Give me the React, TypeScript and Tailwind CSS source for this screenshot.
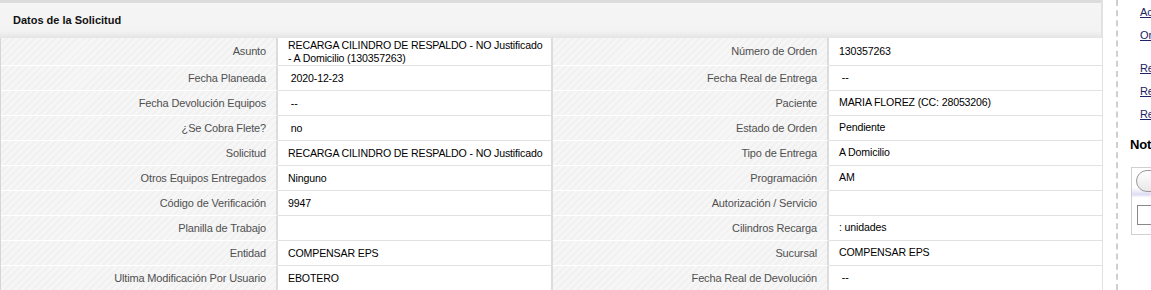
import React from "react";

const rows: [string, React.ReactNode, string, React.ReactNode][] = [
  [
    "Asunto",
    <>
      RECARGA CILINDRO DE RESPALDO - NO Justificado
      <br />- A Domicilio (130357263)
    </>,
    "Número de Orden",
    "130357263",
  ],
  ["Fecha Planeada", "\u00a02020-12-23", "Fecha Real de Entrega", "\u00a0--"],
  ["Fecha Devolución Equipos", "\u00a0--", "Paciente", "MARIA FLOREZ (CC: 28053206)"],
  ["¿Se Cobra Flete?", "\u00a0no", "Estado de Orden", "Pendiente"],
  ["Solicitud", "RECARGA CILINDRO DE RESPALDO - NO Justificado", "Tipo de Entrega", "A Domicilio"],
  ["Otros Equipos Entregados", "Ninguno", "Programación", "AM"],
  ["Código de Verificación", "9947", "Autorización / Servicio", ""],
  ["Planilla de Trabajo", "", "Cilindros Recarga", ": unidades"],
  ["Entidad", "COMPENSAR EPS", "Sucursal", "COMPENSAR EPS"],
  ["Ultima Modificación Por Usuario", "EBOTERO", "Fecha Real de Devolución", "\u00a0--"],
];

const labelCls =
  "flex items-center justify-end pr-[10px] whitespace-nowrap text-[#505050] bg-[#f5f5f5] bg-[repeating-linear-gradient(135deg,#f6f6f6_0px,#f6f6f6_3px,#f1f1f1_3px,#f1f1f1_5px)] border-b border-white";

const valueCls = "pl-[10px] whitespace-nowrap text-[10.6px] bg-white border-b border-[#e2e2e2]";

export default function App() {
  return (
    <div className="flex w-[1151px] h-[290px] overflow-hidden bg-white font-['Liberation_Sans',Arial,sans-serif] text-[11px] tracking-[-0.15px] text-black">
      <div className="w-[1103px] shrink-0 border-r-2 border-[#e2e2e2]">
        <div className="h-[38px] border-t-[3px] border-[#dcdcdc] bg-[linear-gradient(#f5f5f5_0%,#f3f3f3_80%,#e4e4e4_100%)] flex items-center pl-[13px]">
          <span className="font-bold text-[11px] tracking-normal text-[#111]">Datos de la Solicitud</span>
        </div>
        <div className="grid grid-cols-[277px_275px_276px_273px] border-l border-[#d6d6d6]">
          {rows.map(([l1, v1, l2, v2], i) => {
            const h = i === 0 ? "h-[28px]" : "h-[25px]";
            return (
              <React.Fragment key={i}>
                <div className={`${labelCls} ${h} border-r-2 border-r-[#dcdcdc]`}>{l1}</div>
                <div
                  className={`${valueCls} ${h} flex flex-col justify-center leading-[13px] border-r-2 border-r-[#dcdcdc]`}
                >
                  <div>{v1}</div>
                </div>
                <div className={`${labelCls} ${h} border-r-2 border-r-[#dcdcdc]`}>{l2}</div>
                <div className={`${valueCls} ${h} flex items-center`}>{v2}</div>
              </React.Fragment>
            );
          })}
        </div>
      </div>
      <div className="ml-[13px] border-l-2 border-dashed border-[#cfcfcf] pl-[22px] flex-1 overflow-hidden text-[11px]">
        <div className="flex flex-col pt-[5px]">
          <a className="underline text-[#1b2364] leading-[14px]">Ac</a>
          <a className="underline text-[#1b2364] leading-[14px] mt-[9px]">Or</a>
          <a className="underline text-[#1b2364] leading-[14px] mt-[19px]">Re</a>
          <a className="underline text-[#1b2364] leading-[14px] mt-[9px]">Re</a>
          <a className="underline text-[#1b2364] leading-[14px] mt-[9px]">Re</a>
        </div>
        <div className="font-bold text-[13px] mt-[14px] -ml-[10px] text-black">Not</div>
        <div className="mt-[12px] -ml-[9px] h-[68px] border border-[#d0d0d0] border-r-0 bg-[linear-gradient(#fff_0%,#fff_30%,#dcdcf4_40%,#fff_45%)] relative">
          <div className="absolute left-[4px] top-[2px] w-[40px] h-[22px] rounded-full border border-[#999] bg-[linear-gradient(#fff,#e8e8e8)]" />
          <div className="absolute left-[5px] top-[37px] w-[30px] h-[20px] border border-[#888] bg-white" />
        </div>
      </div>
    </div>
  );
}
